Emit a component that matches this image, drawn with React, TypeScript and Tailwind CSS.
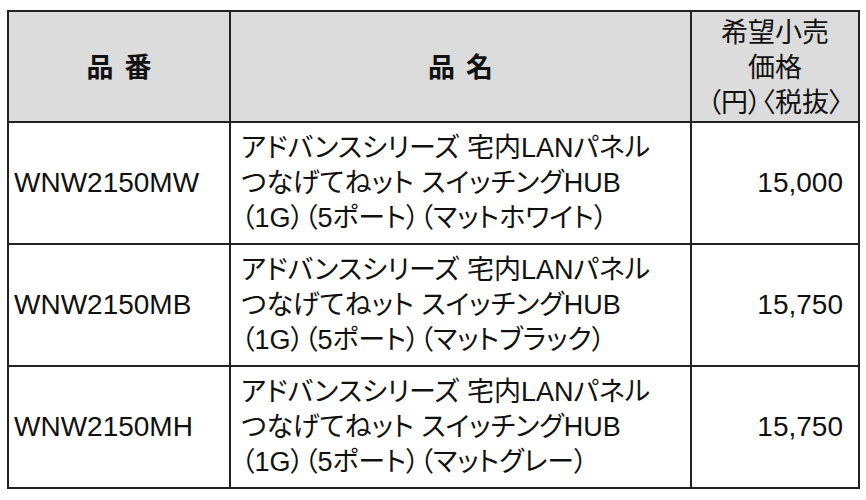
const rows = [
  {
    code: "WNW2150MW",
    name: ["アドバンスシリーズ 宅内LANパネル", "つなげてねット スイッチングHUB", "（1G）（5ポート）（マットホワイト）"],
    price: "15,000",
  },
  {
    code: "WNW2150MB",
    name: ["アドバンスシリーズ 宅内LANパネル", "つなげてねット スイッチングHUB", "（1G）（5ポート）（マットブラック）"],
    price: "15,750",
  },
  {
    code: "WNW2150MH",
    name: ["アドバンスシリーズ 宅内LANパネル", "つなげてねット スイッチングHUB", "（1G）（5ポート）（マットグレー）"],
    price: "15,750",
  },
];

export default function App() {
  return (
    <div className="w-[866px] h-[500px] bg-white pl-[7px] pt-[10px] font-['Liberation_Sans','Noto_Sans_CJK_JP',sans-serif] text-[#111] [font-feature-settings:'palt']">
      <table className="w-[851px] table-fixed border-collapse border-2 border-[#222] text-[27px]">
        <colgroup>
          <col className="w-[222px]" />
          <col className="w-[461px]" />
          <col className="w-[168px]" />
        </colgroup>
        <thead>
          <tr className="h-[110px] bg-[#dcdcdc]">
            <th className="border-2 border-[#222] pt-[4px] font-bold text-center">
              品<span className="inline-block w-[11px]" />番
            </th>
            <th className="border-2 border-[#222] pt-[4px] font-bold text-center">
              品<span className="inline-block w-[11px]" />名
            </th>
            <th className="border-2 border-[#222] pt-[4px] font-normal text-center leading-[35px]">
              <div>希望小売</div>
              <div>価格</div>
              <div>（円）〈税抜〉</div>
            </th>
          </tr>
        </thead>
        <tbody>
          {rows.map((r) => (
            <tr key={r.code} className="h-[122px]">
              <td className="border-2 border-[#222] pl-[5px] text-[28px]">{r.code}</td>
              <td className="border-2 border-[#222] pl-[10px] leading-[35px]">
                {r.name.map((line, i) => (
                  <div key={i} className="whitespace-nowrap">{line}</div>
                ))}
              </td>
              <td className="border-2 border-[#222] pr-[15px] text-right text-[28px]">{r.price}</td>
            </tr>
          ))}
        </tbody>
      </table>
    </div>
  );
}
